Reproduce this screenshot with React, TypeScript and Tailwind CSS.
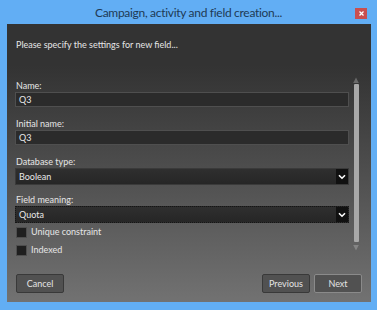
import React from "react";

const font = { fontFamily: 'Lato, "Open Sans", sans-serif' };

function Chevron() {
  return (
    <svg width="8" height="6" viewBox="0 0 8 6">
      <path d="M1 1.2 L4 4.2 L7 1.2" stroke="#ffffff" strokeWidth="1.6" fill="none" />
    </svg>
  );
}

function TextInput({ value }: { value: string }) {
  return (
    <div className="h-[15px] w-[334px] bg-[#2b2b2b] border border-[#4f4f4f] flex items-center pl-[3px] text-[9px] text-[#e8e8e8] leading-none">
      {value}
    </div>
  );
}

function Select({ value, dotted }: { value: string; dotted?: boolean }) {
  return (
    <div
      className={
        "h-[17px] w-[334px] bg-gradient-to-b from-[#2f2f2f] to-[#262626] flex items-center justify-between pl-[3px] text-[9px] text-[#e8e8e8] leading-none border " +
        (dotted ? "border-dotted border-[#151515]" : "border-[#3a3a3a]")
      }
    >
      <span>{value}</span>
      <div className="h-[15px] w-[12px] bg-[#111111] flex items-center justify-center">
        <Chevron />
      </div>
    </div>
  );
}

function Check({ label }: { label: string }) {
  return (
    <div className="h-[18px] flex items-center gap-[4px]">
      <div className="w-[11px] h-[11px] bg-[#1f1f1f] border border-[#4e4e4e]" />
      <span className="text-[9px] text-[#e6e6e6]">{label}</span>
    </div>
  );
}

function Btn({ label, light }: { label: string; light?: boolean }) {
  return (
    <div
      className={
        "w-[48px] h-[19px] rounded-[2px] flex items-center justify-center text-[9px] text-[#e4e4e4] bg-[#515151] border " +
        (light ? "border-[#8a8a8a]" : "border-[#393939]")
      }
    >
      {label}
    </div>
  );
}

export default function App() {
  return (
    <div style={font} className="w-[377px] h-[310px] bg-[#62aef4] flex flex-col overflow-hidden">
      <div className="h-[24px] relative flex items-center justify-center shrink-0">
        <span className="text-[12px] tracking-[-0.3px] text-[#203a55] pt-[1px]">Campaign, activity and field creation...</span>
        <div className="absolute right-[10px] top-[8px] w-[12px] h-[11px] bg-[#c94f4f] flex items-center justify-center">
          <svg width="5" height="5" viewBox="0 0 5 5">
            <path d="M0.5 0.5 L4.5 4.5 M4.5 0.5 L0.5 4.5" stroke="#fff" strokeWidth="1.3" />
          </svg>
        </div>
      </div>
      <div className="ml-[7px] w-[364px] h-[278px] bg-gradient-to-b from-[#333333] from-[15%] to-[#727272] flex flex-col">
        <div className="flex">
          <div className="flex flex-col pl-[8px]">
            <div className="mt-[15px] h-[12px] leading-[12px] text-[9px] text-[#e6e6e6] pl-[1px]">
              Please specify the settings for new field...
            </div>
            <div className="mt-[29px] h-[12px] leading-[12px] text-[9px] text-[#e6e6e6] pl-[1px]">Name:</div>
            <TextInput value="Q3" />
            <div className="mt-[11px] h-[12px] leading-[12px] text-[9px] text-[#e6e6e6] pl-[1px]">Initial name:</div>
            <TextInput value="Q3" />
            <div className="mt-[11px] h-[12px] leading-[12px] text-[9px] text-[#e6e6e6] pl-[1px]">Database type:</div>
            <Select value="Boolean" />
            <div className="mt-[9px] h-[12px] leading-[12px] text-[9px] text-[#e6e6e6] pl-[1px]">Field meaning:</div>
            <Select value="Quota" dotted />
            <div className="pl-[1px]">
              <Check label="Unique constraint" />
              <Check label="Indexed" />
            </div>
          </div>
          <div className="ml-[4px] mt-[53px] w-[6px] flex flex-col items-center">
            <svg width="6" height="6" viewBox="0 0 6 6">
              <path d="M3 0.5 L5.8 6 L0.2 6 Z" fill="#6a6a6a" />
            </svg>
            <div className="mt-[1px] w-[5px] h-[158px] bg-[#a9a9a9] rounded-[1px]" />
            <svg className="mt-[3px]" width="6" height="6" viewBox="0 0 6 6">
              <path d="M0.2 0 L5.8 0 L3 5.5 Z" fill="#858585" />
            </svg>
          </div>
        </div>
        <div className="mt-[15px] flex px-[9px]">
          <Btn label="Cancel" />
          <div className="flex-1" />
          <Btn label="Previous" />
          <div className="w-[4px]" />
          <Btn label="Next" light />
        </div>
      </div>
    </div>
  );
}
